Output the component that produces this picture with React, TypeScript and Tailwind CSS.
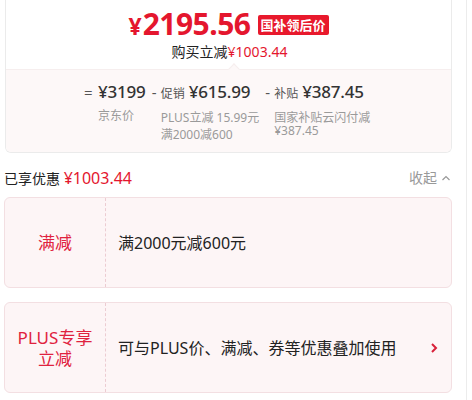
const font = "font-['Noto_Sans','Noto_Sans_CJK_SC',sans-serif]"

const parts = [
  { op: "=", label: "", value: "¥3199", desc: ["京东价"], lead: "leading-[17px]" },
  { op: "-", label: "促销", value: "¥615.99", desc: ["PLUS立减 15.99元", "满2000减600"], lead: "leading-[17px]" },
  { op: "-", label: "补贴", value: "¥387.45", desc: ["国家补贴云闪付减", "¥387.45"], lead: "leading-[13px] pt-[2px]" },
]

function PriceCard() {
  return (
    <div className="border-x border-b border-[#ebebeb] rounded-b-[6px] overflow-hidden bg-white">
      <div className="h-[69px] flex flex-col items-center">
        <div className="flex items-center pt-[5px] h-[43px]">
          <span className="text-[#e4162e] font-bold text-[23px] leading-none mt-[4px] mr-[1px]">¥</span>
          <span className="text-[#e4162e] font-bold text-[30px] leading-none tracking-[-0.5px]">2195.56</span>
          <span className="ml-[7px] mt-[2px] bg-[#e8192c] text-white text-[13px] font-bold leading-[20px] px-[3px] rounded-[2px]">
            国补领后价
          </span>
        </div>
        <div className="text-[14px] leading-[18px] text-[#222] ml-[2px]">
          购买立减<span className="text-[#e4162e]">¥1003.44</span>
        </div>
      </div>
      <div className="relative h-[83px] bg-[#fdf8f8] border-t border-[#f6eeee]">
        <div className="absolute -top-[5px] left-[224px] w-[8px] h-[8px] rotate-45 bg-[#fdf8f8] border-l border-t border-[#f6eeee]" />
        <div className="flex items-start pl-[78px] pt-[11px] gap-[6px]">
          {parts.map((p, i) => (
            <div key={i} className="flex items-start">
              <span className={`text-[15px] leading-[22px] text-[#555] ${i === 0 ? "w-[14px]" : "w-[9px]"}`}>{p.op}</span>
              <div className="flex flex-col">
                <div className="flex items-baseline leading-[22px]">
                  {p.label && <span className="text-[12px] text-[#555] mr-[4px]">{p.label}</span>}
                  <span className="text-[17px] font-medium text-[#333] tracking-[-0.2px]">{p.value}</span>
                </div>
                <div className={`mt-[4px] flex flex-col text-[12px] text-[#9a9a9a] ${p.lead}`}>
                  {p.desc.map((d) => (
                    <span key={d}>{d}</span>
                  ))}
                </div>
              </div>
            </div>
          ))}
        </div>
      </div>
    </div>
  )
}

function Chevron({ className }: { className: string }) {
  return (
    <svg viewBox="0 0 12 12" className={className} fill="none" stroke="currentColor">
      <path d="M2.5 8 L6 4.5 L9.5 8" strokeWidth="1.2" />
    </svg>
  )
}

function PromoCard({ title, text, arrow }: { title: string[]; text: string; arrow?: boolean }) {
  return (
    <div className="flex h-[91px] rounded-[6px] border border-[#f3dfe2] bg-[#fdf5f6]">
      <div className="w-[101px] shrink-0 flex flex-col items-center justify-center border-r border-dashed border-[#ecccd2] text-[#e0223e] text-[17px] leading-[21px]">
        {title.map((t) => (
          <span key={t}>{t}</span>
        ))}
      </div>
      <div className="flex-1 flex items-center pl-[12px] pr-[11px] text-[16px] text-[#222]">
        <span className="flex-1">{text}</span>
        {arrow && (
          <svg viewBox="0 0 12 12" className="w-[12px] h-[12px] text-[#d8203a]" fill="none" stroke="currentColor">
            <path d="M4 2 L8 6 L4 10" strokeWidth="2" />
          </svg>
        )}
      </div>
    </div>
  )
}

export default function App() {
  return (
    <div className={`w-[472px] h-[400px] bg-white overflow-hidden flex ${font}`}>
      <div className="w-[452px] pl-[5px] shrink-0">
        <PriceCard />
        <div className="flex items-center justify-between h-[44px] pt-[5px]">
          <div className="text-[14px] text-[#222] -ml-[1px]">
            已享优惠 <span className="text-[#e4162e] text-[16px]">¥1003.44</span>
          </div>
          <div className="flex items-center text-[14px] text-[#999]">
            收起
            <Chevron className="w-[12px] h-[12px] ml-[3px]" />
          </div>
        </div>
        <div className="flex flex-col gap-[14px] -ml-[1px]">
          <PromoCard title={["满减"]} text="满2000元减600元" />
          <PromoCard title={["PLUS专享", "立减"]} text="可与PLUS价、满减、券等优惠叠加使用" arrow />
        </div>
      </div>
      <div className="ml-[14px] w-px bg-[#ececec]" />
    </div>
  )
}
